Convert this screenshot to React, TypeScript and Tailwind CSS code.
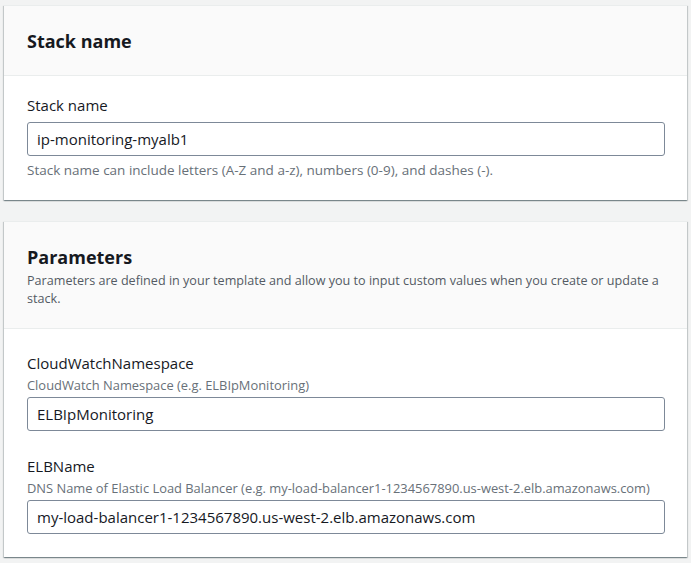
import React from "react";

const cardShadow =
  "shadow-[0_1px_1px_0_rgba(0,28,36,0.3),1px_1px_1px_0_rgba(0,28,36,0.15),-1px_1px_1px_0_rgba(0,28,36,0.15)]";

function Field({
  label,
  desc,
  value,
  className = "",
}: {
  label: string;
  desc: string;
  value: string;
  className?: string;
}) {
  return (
    <div className={className}>
      <div className="text-[15px] leading-[22px] text-[#16191f]">{label}</div>
      <div className="mt-[3px] text-[12.9px] leading-[16px] text-[#687078]">{desc}</div>
      <div className="mt-[4px] h-[34px] rounded-[3px] border border-[#7d8998] bg-white px-[9px] flex items-center text-[15px] text-[#16191f]">
        {value}
      </div>
    </div>
  );
}

export default function App() {
  return (
    <div className="min-h-[563px] bg-[#f2f3f3] px-[4px] pt-[5px] pb-[6px] font-['Open_Sans',sans-serif]">
      <div className={`bg-white border-t border-[#eaeded] ${cardShadow}`}>
        <div className="h-[70px] bg-[#fafafa] border-b border-[#eaeded] pl-[23px] pr-[22px] flex items-center">
          <h2 className="text-[18px] leading-[22px] font-bold text-[#16191f]">Stack name</h2>
        </div>
        <div className="pl-[23px] pr-[22px] pt-[18px] pb-[22px]">
          <div className="text-[15px] leading-[22px] text-[#16191f]">Stack name</div>
          <div className="mt-[6px] h-[34px] rounded-[3px] border border-[#7d8998] bg-white px-[9px] flex items-center text-[15px] text-[#16191f]">
            ip-monitoring-myalb1
          </div>
          <div className="mt-[6px] text-[13.5px] leading-[16px] text-[#687078]">
            Stack name can include letters (A-Z and a-z), numbers (0-9), and dashes (-).
          </div>
        </div>
      </div>

      <div className={`mt-[21px] bg-white border-t border-[#eaeded] ${cardShadow}`}>
        <div className="bg-[#fafafa] border-b border-[#eaeded] pl-[23px] pr-[22px] pt-[24px] pb-[20px]">
          <h2 className="text-[18px] leading-[22px] font-bold text-[#16191f]">Parameters</h2>
          <p className="mt-[4px] text-[12.6px] leading-[18px] text-[#545b64]">
            Parameters are defined in your template and allow you to input custom values when you create or update a stack.
          </p>
        </div>
        <div className="pl-[23px] pr-[22px] pt-[23px] pb-[23px]">
          <Field
            label="CloudWatchNamespace"
            desc="CloudWatch Namespace (e.g. ELBIpMonitoring)"
            value="ELBIpMonitoring"
          />
          <Field
            className="mt-[24px]"
            label="ELBName"
            desc="DNS Name of Elastic Load Balancer (e.g. my-load-balancer1-1234567890.us-west-2.elb.amazonaws.com)"
            value="my-load-balancer1-1234567890.us-west-2.elb.amazonaws.com"
          />
        </div>
      </div>
    </div>
  );
}
